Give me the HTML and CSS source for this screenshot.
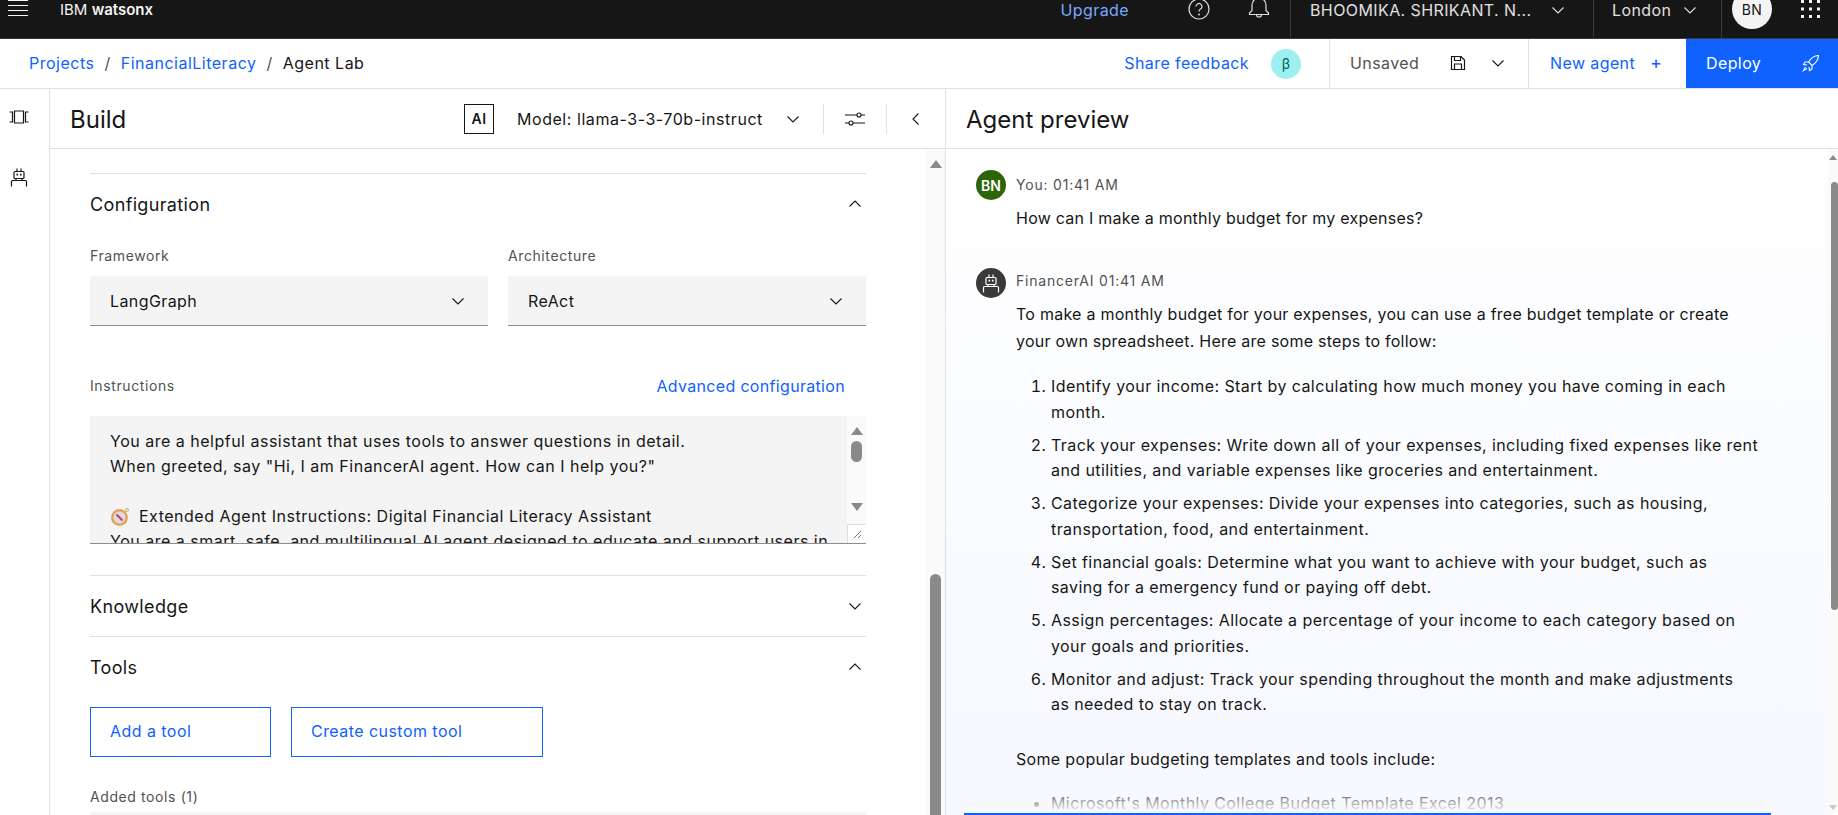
FILE: index.html
```html
<!DOCTYPE html>
<html lang="en">
<head>
    <meta charset="UTF-8">
    <meta name="viewport" content="width=device-width, initial-scale=1.0">
    <title>Agent Lab - IBM watsonx</title>
    <link rel="stylesheet" href="styles.css">
</head>
<body>
    <svg class="defs" width="0" height="0">
        <symbol id="chev-down" viewBox="0 0 16 16"><path d="M2.5 5.5 8 11l5.500-5.500" fill="none" stroke="currentColor" stroke-width="1.1"/></symbol>
        <symbol id="chev-up" viewBox="0 0 16 16"><path d="M2.500 10.500 8 5l5.500 5.500" fill="none" stroke="currentColor" stroke-width="1.1"/></symbol>
        <symbol id="bot" viewBox="0 0 20 20" >
            <g fill="none" stroke="currentColor" stroke-width="1.200">
                <rect x="5" y="4.500" width="10" height="7" rx="1"/>
                <path d="M8 4.500V1.500M12 4.500V1.500M7 11.500v2M13 11.500v2M2.500 19.500v-5a1 1 0 0 1 1-1h13a1 1 0 0 1 1 1v5"/>
            </g>
            <path d="M7.500 6.800h1.600v1.600H7.500zM10.900 6.800h1.600v1.600h-1.600z" fill="currentColor"/>
        </symbol>
    </svg>

    <header class="topbar">
        <div class="topbar-left">
            <svg class="hamburger" width="20" height="16" viewBox="0 0 20 16"><path d="M0 .5h20M0 5.500h20M0 10.500h20M0 15.500h20" stroke="#f4f4f4" stroke-width="1"/></svg>
            <span class="brand">IBM <b>watsonx</b></span>
        </div>
        <div class="topbar-right">
            <a class="upgrade">Upgrade</a>
            <svg class="help" width="22" height="22" viewBox="0 0 22 22"><circle cx="11" cy="11" r="10" fill="none" stroke="#e0e0e0" stroke-width="1.200"/><path d="M8 8.500a3 3 0 1 1 4.500 2.600c-1 .6-1.500 1.200-1.500 2.400" fill="none" stroke="#e0e0e0" stroke-width="1.200"/><circle cx="11" cy="16.500" r=".9" fill="#e0e0e0"/></svg>
            <svg class="bell" width="22" height="24" viewBox="0 0 22 24"><path d="M11 0a7 7 0 0 0-7 7v5.500l-2.500 2.500v1.500h19v-1.500L18 12.500V7a7 7 0 0 0-7-7zM8.500 16.500a2.500 2.500 0 0 0 5 0" fill="none" stroke="#e0e0e0" stroke-width="1.200"/></svg>
            <div class="switcher account">
                <span>BHOOMIKA. SHRIKANT. N...</span>
                <svg width="16" height="16"><use href="#chev-down"/></svg>
            </div>
            <div class="switcher region">
                <span>London</span>
                <svg width="16" height="16"><use href="#chev-down"/></svg>
            </div>
            <div class="user-slot"><span class="user-avatar">BN</span></div>
            <svg class="apps" width="19" height="18" viewBox="0 0 19 18"><path d="M0 0h3v3H0zM8 0h3v3H8zM16 0h3v3h-3zM0 7.500h3v3H0zM8 7.500h3v3H8zM16 7.500h3v3h-3zM0 15h3v3H0zM8 15h3v3H8zM16 15h3v3h-3z" fill="#f4f4f4"/></svg>
        </div>
    </header>

    <nav class="subbar">
        <div class="crumbs">
            <a>Projects</a><span class="sep">/</span><a>FinancialLiteracy</a><span class="sep">/</span><span>Agent Lab</span>
        </div>
        <div class="subbar-right">
            <a class="feedback">Share feedback</a>
            <span class="beta">β</span>
            <div class="save-group">
                <span class="unsaved">Unsaved</span>
                <svg class="save" width="16" height="16" viewBox="0 0 16 16"><path d="M1.500 1.500h9.500l3.500 3.500v9.500h-13zM4.500 1.500v4h6v-4M4.500 14.500V9h7v5.500" fill="none" stroke="#161616" stroke-width="1.200"/></svg>
                <svg class="save-chev" width="16" height="16"><use href="#chev-down"/></svg>
            </div>
            <a class="new-agent">New agent <span class="plus">+</span></a>
            <button class="deploy">
                <span>Deploy</span>
                <svg width="18" height="18" viewBox="0 0 18 18"><path d="M16.500 1.500c-4.500.3-7.500 2.300-10 6.500l3.500 3.500c4.200-2.500 6.200-5.500 6.500-10zM6.500 8H3L1.500 10.500l3.500.5M10 11.500V15l-2.500 1.500-.5-3.500M3.500 13 1.500 16.500 5 14.500" fill="none" stroke="#fff" stroke-width="1.100"/></svg>
            </button>
        </div>
    </nav>

    <main class="workspace">
        <aside class="rail">
            <svg class="rail-icon" width="20" height="14" viewBox="0 0 20 14"><path d="M5.500 1h9v12h-9zM.5 2h3v10h-3M19.500 2h-3v10h3" fill="none" stroke="#161616" stroke-width="1.200"/></svg>
            <svg class="rail-icon" width="20" height="20"><use href="#bot"/></svg>
        </aside>

        <section class="build">
            <div class="panel-head">
                <h2 class="panel-title">Build</h2>
                <div class="model">
                    <span class="ai-badge">AI</span>
                    <span class="model-name">Model: llama-3-3-70b-instruct</span>
                    <svg class="model-chev" width="16" height="16"><use href="#chev-down"/></svg>
                    <span class="head-div"></span>
                    <svg class="sliders" width="20" height="16" viewBox="0 0 20 16"><path d="M0 4h12M16 4h4M0 12h4M8 12h12" stroke="#161616" stroke-width="1.100"/><circle cx="14" cy="4" r="2" fill="none" stroke="#161616" stroke-width="1.100"/><circle cx="6" cy="12" r="2" fill="none" stroke="#161616" stroke-width="1.100"/></svg>
                    <span class="head-div"></span>
                    <svg class="collapse" width="16" height="16" viewBox="0 0 16 16"><path d="M10.500 2.500 5 8l5.500 5.500" fill="none" stroke="#161616" stroke-width="1.100"/></svg>
                </div>
            </div>
            <div class="build-body">
                <div class="build-content">
                    <div class="section-head">
                        <span>Configuration</span>
                        <svg width="16" height="16"><use href="#chev-up"/></svg>
                    </div>
                    <div class="field-row">
                        <div class="field field-fw">
                            <label class="label">Framework</label>
                            <div class="select"><span>LangGraph</span><svg width="16" height="16"><use href="#chev-down"/></svg></div>
                        </div>
                        <div class="field field-arch">
                            <label class="label">Architecture</label>
                            <div class="select"><span>ReAct</span><svg width="16" height="16"><use href="#chev-down"/></svg></div>
                        </div>
                    </div>
                    <div class="instr-head">
                        <label class="label">Instructions</label>
                        <a class="advanced">Advanced configuration</a>
                    </div>
                    <div class="instructions">
                        <div class="instr-text">
                            <p>You are a helpful assistant that uses tools to answer questions in detail.</p>
                            <p>When greeted, say "Hi, I am FinancerAI agent. How can I help you?"</p>
                            <p>&nbsp;</p>
                            <p class="compass-line">
                                <svg width="20" height="20" viewBox="0 0 20 20"><circle cx="9.500" cy="10.500" r="8.500" fill="#e2a35c"/><circle cx="9.500" cy="10.500" r="6" fill="#d9dbe6"/><path d="M6.500 7.500l6 6" stroke="#c8424a" stroke-width="2"/><circle cx="17" cy="3" r="1.500" fill="none" stroke="#e2a35c"/></svg>
                                Extended Agent Instructions: Digital Financial Literacy Assistant
                            </p>
                            <p>You are a smart, safe, and multilingual AI agent designed to educate and support users in</p>
                        </div>
                        <div class="instr-bar">
                            <span class="arrow-up"></span>
                            <span class="instr-thumb"></span>
                            <span class="arrow-down"></span>
                            <span class="resize">
                                <svg width="10" height="10" viewBox="0 0 10 10"><path d="M9 2 2 9M9 6 6 9" stroke="#777" stroke-width="1"/></svg>
                            </span>
                        </div>
                    </div>
                    <div class="section-head knowledge">
                        <span>Knowledge</span>
                        <svg width="16" height="16"><use href="#chev-down"/></svg>
                    </div>
                    <div class="section-head tools">
                        <span>Tools</span>
                        <svg width="16" height="16"><use href="#chev-up"/></svg>
                    </div>
                    <div class="tool-buttons">
                        <button class="tool-btn add-tool">Add a tool</button>
                        <button class="tool-btn custom-tool">Create custom tool</button>
                    </div>
                    <label class="label added">Added tools (1)</label>
                    <div class="added-box"></div>
                </div>
                <div class="build-scroll">
                    <span class="arrow-up"></span>
                    <span class="build-thumb"></span>
                </div>
            </div>
        </section>

        <section class="preview">
            <div class="panel-head">
                <h2 class="panel-title">Agent preview</h2>
            </div>
            <div class="preview-body">
                <div class="chat-col">
                    <div class="chat">
                        <div class="msg user-msg">
                            <span class="avatar avatar-user">BN</span>
                            <div class="msg-main">
                                <div class="msg-meta">You: 01:41 AM</div>
                                <p class="msg-text">How can I make a monthly budget for my expenses?</p>
                            </div>
                        </div>
                        <div class="msg">
                            <span class="avatar avatar-bot"><svg width="20" height="20"><use href="#bot"/></svg></span>
                            <div class="msg-main">
                                <div class="msg-meta bot-meta">FinancerAI 01:41 AM</div>
                                <p class="msg-text">To make a monthly budget for your expenses, you can use a free budget template or create<br>your own spreadsheet. Here are some steps to follow:</p>
                                <ol class="steps">
                                    <li>Identify your income: Start by calculating how much money you have coming in each<br>month.</li>
                                    <li>Track your expenses: Write down all of your expenses, including fixed expenses like rent<br>and utilities, and variable expenses like groceries and entertainment.</li>
                                    <li>Categorize your expenses: Divide your expenses into categories, such as housing,<br>transportation, food, and entertainment.</li>
                                    <li>Set financial goals: Determine what you want to achieve with your budget, such as<br>saving for a emergency fund or paying off debt.</li>
                                    <li>Assign percentages: Allocate a percentage of your income to each category based on<br>your goals and priorities.</li>
                                    <li>Monitor and adjust: Track your spending throughout the month and make adjustments<br>as needed to stay on track.</li>
                                </ol>
                                <p class="msg-text popular">Some popular budgeting templates and tools include:</p>
                                <ul class="templates">
                                    <li>Microsoft's Monthly College Budget Template Excel 2013</li>
                                </ul>
                            </div>
                        </div>
                        <div class="chat-fade"></div>
                    </div>
                    <div class="input-line"></div>
                </div>
                <div class="chat-scroll">
                    <span class="arrow-up"></span>
                    <span class="chat-thumb"></span>
                    <span class="arrow-down small"></span>
                </div>
            </div>
        </section>
    </main>
</body>
</html>
```

FILE: styles.css
```css
* {
    box-sizing: border-box;
}
html, body {
    margin: 0;
    height: 815px;
    overflow: hidden;
}
body {
    font-family: Inter, Arial, sans-serif;
    font-size: 16px;
    letter-spacing: .4px;
    color: #161616;
    background: #fff;
    display: flex;
    flex-direction: column;
}
a {
    color: #0f62fe;
}
p, h2 {
    margin: 0;
}
svg {
    flex-shrink: 0;
    display: block;
}
.defs {
    position: absolute;
}

/* top bar, scrolled up a little in the shot */
.topbar {
    height: 39px;
    flex-shrink: 0;
    background: #161616;
    border-bottom: 1px solid #393939;
    color: #e0e0e0;
    display: flex;
    justify-content: space-between;
    overflow: hidden;
}
.topbar-left {
    display: flex;
    align-items: flex-start;
    padding-left: 8px;
}
.brand {
    margin-left: 32px;
    line-height: 20px;
    font-size: 15px;
    letter-spacing: 0;
    color: #f4f4f4;
}
.brand b {
    font-weight: 600;
}
.topbar-right {
    display: flex;
    align-items: flex-start;
}
.upgrade {
    line-height: 20px;
    color: #78a9ff;
    margin-right: 59px;
}
.help {
    margin-top: -2px;
    margin-right: 38px;
}
.bell {
    margin-top: -2px;
    margin-right: 20px;
}
.switcher {
    height: 38px;
    border-left: 1px solid #393939;
    display: flex;
    align-items: flex-start;
    line-height: 20px;
}
.switcher svg {
    margin-top: 2px;
}
.account {
    width: 303px;
    padding-left: 19px;
    gap: 19px;
}
.region {
    width: 128px;
    padding-left: 18px;
    gap: 11px;
}
.user-slot {
    width: 117px;
    height: 38px;
    border-left: 1px solid #393939;
    padding-left: 10px;
}
.user-avatar {
    width: 40px;
    height: 40px;
    margin-top: -11px;
    border-radius: 50%;
    background: #f4f4f4;
    color: #161616;
    font-size: 14px;
    display: flex;
    align-items: center;
    justify-content: center;
}
.apps {
    margin-left: -37px;
    margin-right: 18px;
}

/* breadcrumb row */
.subbar {
    height: 50px;
    flex-shrink: 0;
    border-bottom: 1px solid #e0e0e0;
    display: flex;
    justify-content: space-between;
    align-items: stretch;
    padding-left: 29px;
}
.crumbs {
    display: flex;
    align-items: center;
    padding-bottom: 2px;
    letter-spacing: .5px;
}
.sep {
    margin: 0 10px;
    color: #525252;
}
.subbar-right {
    display: flex;
    align-items: center;
}
.feedback {
    margin-top: -2px;
}
.beta {
    width: 30px;
    height: 30px;
    margin-left: 22px;
    margin-right: 28px;
    border-radius: 50%;
    background: #9ef0f0;
    color: #005d5d;
    font-size: 14px;
    display: flex;
    align-items: center;
    justify-content: center;
}
.save-group {
    width: 200px;
    height: 100%;
    border-left: 1px solid #e0e0e0;
    border-right: 1px solid #e0e0e0;
    display: flex;
    align-items: center;
    padding: 0 0 2px 20px;
}
.unsaved {
    color: #525252;
    width: 100px;
}
.save-chev {
    margin-left: 24px;
}
.new-agent {
    width: 157px;
    padding-left: 21px;
    margin-top: -2px;
}
.plus {
    margin-left: 10px;
    font-size: 18px;
}
.deploy {
    width: 152px;
    height: 100%;
    border: 0;
    background: #0f62fe;
    color: #fff;
    font: inherit;
    letter-spacing: .4px;
    padding: 0 18px 2px 20px;
    display: flex;
    align-items: center;
    justify-content: space-between;
}

/* main area */
.workspace {
    flex: 1;
    min-height: 0;
    display: flex;
}
.rail {
    width: 50px;
    flex-shrink: 0;
    border-right: 1px solid #e0e0e0;
    display: flex;
    flex-direction: column;
    gap: 43px;
    padding: 21px 0 0 9px;
}
.build {
    width: 896px;
    flex-shrink: 0;
    border-right: 1px solid #e0e0e0;
    display: flex;
    flex-direction: column;
    min-height: 0;
}
.panel-head {
    height: 60px;
    flex-shrink: 0;
    border-bottom: 1px solid #e0e0e0;
    display: flex;
    align-items: center;
    justify-content: space-between;
    padding-left: 20px;
}
.panel-title {
    font-size: 24px;
    font-weight: 400;
    letter-spacing: 0;
    margin-top: 2px;
}
.model {
    display: flex;
    align-items: center;
}
.ai-badge {
    width: 30px;
    height: 30px;
    border: 1px solid #161616;
    font-size: 14px;
    font-weight: 600;
    display: flex;
    align-items: center;
    justify-content: center;
}
.model-name {
    margin-left: 23px;
    width: 268px;
    letter-spacing: .55px;
}
.head-div {
    width: 1px;
    height: 30px;
    background: #e0e0e0;
}
.model-chev {
    margin-right: 22px;
}
.sliders {
    margin: 0 21px;
}
.collapse {
    margin: 0 21px;
}
.build-body {
    flex: 1;
    min-height: 0;
    display: flex;
    justify-content: space-between;
}
.build-content {
    width: 776px;
    margin-left: 40px;
    padding-top: 24px;
}
.section-head {
    height: 61px;
    border-top: 1px solid #e0e0e0;
    font-size: 18px;
    letter-spacing: .35px;
    display: flex;
    align-items: center;
    justify-content: space-between;
    padding-right: 3px;
}
.field-row {
    display: flex;
    justify-content: space-between;
}
.label {
    display: block;
    font-size: 14px;
    line-height: 18px;
    letter-spacing: .6px;
    color: #525252;
}
.field {
    padding-top: 13px;
}
.field-fw {
    width: 398px;
}
.field-arch {
    width: 358px;
}
.select {
    height: 50px;
    margin-top: 11px;
    background: #f4f4f4;
    border-bottom: 1px solid #8d8d8d;
    display: flex;
    align-items: center;
    justify-content: space-between;
    padding: 0 22px 0 20px;
}
.instr-head {
    display: flex;
    justify-content: space-between;
    align-items: center;
    height: 30px;
    margin-top: 45px;
    padding-right: 21px;
}
.advanced {
    letter-spacing: .32px;
}
.instructions {
    height: 128px;
    margin-top: 15px;
    margin-bottom: 31px;
    background: #f4f4f4;
    border-bottom: 1px solid #8d8d8d;
    display: flex;
    overflow: hidden;
}
.instr-text {
    flex: 1;
    padding: 13px 0 0 20px;
    line-height: 25px;
    letter-spacing: .5px;
    white-space: nowrap;
    overflow: hidden;
}
.compass-line {
    display: flex;
    align-items: center;
    gap: 9px;
}
.instr-bar {
    width: 19px;
    flex-shrink: 0;
    background: #fafafa;
    display: flex;
    flex-direction: column;
    align-items: center;
    padding-top: 11px;
    position: relative;
}
.arrow-up {
    width: 0;
    height: 0;
    border-left: 6px solid transparent;
    border-right: 6px solid transparent;
    border-bottom: 8px solid #8a8a8a;
}
.arrow-down {
    width: 0;
    height: 0;
    border-left: 6px solid transparent;
    border-right: 6px solid transparent;
    border-top: 8px solid #8a8a8a;
}
.instr-thumb {
    width: 11px;
    height: 21px;
    margin-top: 6px;
    margin-bottom: 41px;
    border-radius: 6px;
    background: #8a8a8a;
}
.resize {
    position: absolute;
    right: 0;
    bottom: 0;
    width: 19px;
    height: 19px;
    background: #fff;
    border-left: 1px solid #dcdcdc;
    border-top: 1px solid #dcdcdc;
    display: flex;
    align-items: center;
    justify-content: center;
}
.tool-buttons {
    display: flex;
    gap: 20px;
    margin-top: 10px;
}
.tool-btn {
    height: 50px;
    background: #fff;
    border: 1px solid #0f62fe;
    color: #0f62fe;
    font: inherit;
    letter-spacing: .45px;
    text-align: left;
    padding: 0 19px 2px;
}
.add-tool {
    width: 181px;
}
.custom-tool {
    width: 252px;
}
.added {
    margin-top: 31px;
}
.added-box {
    height: 40px;
    margin-top: 6px;
    background: #f4f4f4;
}
.build-scroll {
    width: 19px;
    background: #fafafa;
    display: flex;
    flex-direction: column;
    align-items: center;
    padding-top: 11px;
}
.build-thumb {
    width: 11px;
    flex: 1;
    margin-top: 406px;
    background: #8a8a8a;
    margin-bottom: -10px;
    border-radius: 6px 6px 0 0;
}

/* preview side */
.preview {
    flex: 1;
    min-width: 0;
    display: flex;
    flex-direction: column;
}
.preview-body {
    flex: 1;
    min-height: 0;
    display: flex;
    background: linear-gradient(#fff, #f7f9ff 85%);
}
.chat-col {
    flex: 1;
    min-width: 0;
    display: flex;
    flex-direction: column;
}
.chat {
    flex: 1;
    min-height: 0;
    overflow: hidden;
    position: relative;
    padding: 21px 0 0 30px;
}
.chat-fade {
    position: absolute;
    left: 0;
    right: 0;
    bottom: 0;
    height: 30px;
    background: linear-gradient(rgba(247, 249, 255, 0), rgba(247, 249, 255, 1));
}
.input-line {
    height: 2px;
    margin: 0 57px 0 18px;
    background: #0f62fe;
}
.msg {
    display: flex;
    gap: 10px;
}
.user-msg {
    margin-bottom: 36px;
}
.avatar {
    width: 30px;
    height: 30px;
    flex-shrink: 0;
    border-radius: 50%;
    color: #fff;
    display: flex;
    align-items: center;
    justify-content: center;
}
.avatar-user {
    background: #2d660a;
    font-size: 14px;
    font-weight: 600;
    letter-spacing: 0;
}
.avatar-bot {
    background: #393939;
}
.msg-main {
    width: 760px;
}
.msg-meta {
    font-size: 14px;
    letter-spacing: .8px;
    line-height: 30px;
    color: #525252;
}
.bot-meta {
    margin-top: -2px;
}
.msg-text {
    line-height: 27px;
    letter-spacing: .25px;
    margin-top: 5px;
}
.steps, .templates {
    margin: 19px 0 0;
    padding-left: 35px;
    line-height: 25.600px;
    letter-spacing: .42px;
}
.steps li {
    margin-bottom: 7.400px;
}
.popular {
    margin-top: 28px;
    letter-spacing: .33px;
}
.templates {
    margin-top: 18px;
}
.chat-scroll {
    width: 10px;
    flex-shrink: 0;
    background: #fafafa;
    display: flex;
    flex-direction: column;
    align-items: center;
    padding-top: 6px;
}
.chat-scroll .arrow-up {
    border-left-width: 4px;
    border-right-width: 4px;
    border-bottom-width: 5px;
}
.chat-thumb {
    width: 7px;
    height: 428px;
    margin-top: 22px;
    margin-left: 3px;
    border-radius: 4px;
    background: #8a8a8a;
}
.small {
    margin-top: auto;
    margin-bottom: 5px;
    border-left-width: 4px;
    border-right-width: 4px;
    border-top-width: 5px;
    border-top-color: #c8c8c8;
}
```
